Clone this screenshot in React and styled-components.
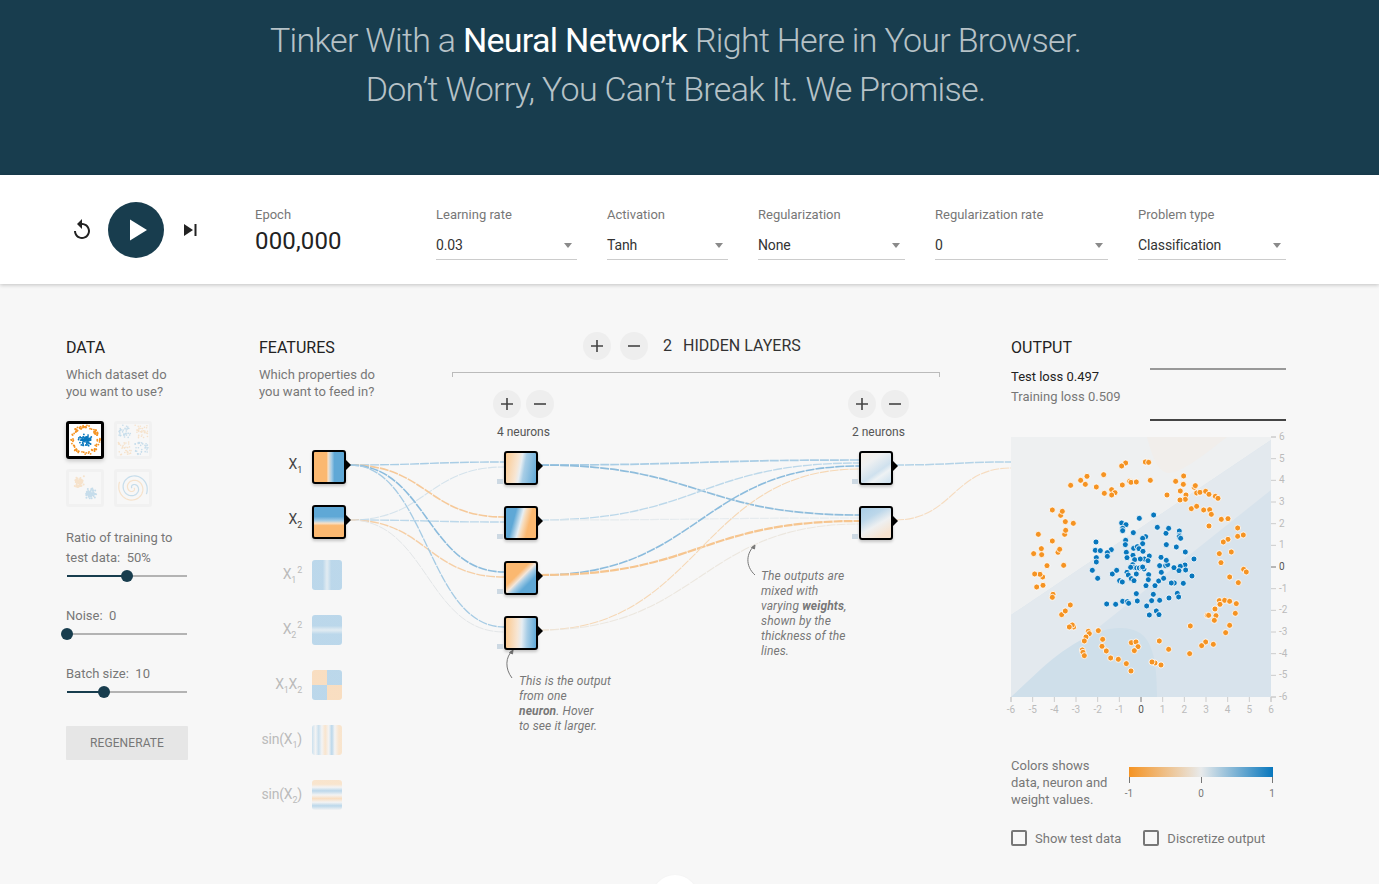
import React from "react";
import styled, { createGlobalStyle } from "styled-components";

const Global = createGlobalStyle`
  html, body { margin: 0; padding: 0; background: #f7f7f7; height: 884px; overflow: hidden; }
  body { font-family: Roboto, "Liberation Sans", sans-serif; color: #777; font-size: 13px; }
  * { box-sizing: border-box; }
`;

const Page = styled.div`position: relative; width: 1379px; height: 884px; overflow: hidden;`;
const Header = styled.header`
  height: 175px; background: #183d4e; padding: 16px 28px 0 0; text-align: center;
`;
const Title = styled.h1`
  margin: 0; font-size: 34px; line-height: 49px; font-weight: 300; color: rgba(255,255,255,.7); letter-spacing: -.7px;
  b { font-weight: 400; color: #fff; }
`;
const Toolbar = styled.section`
  height: 109px; background: #fff; box-shadow: 0 1px 4px rgba(0,0,0,.22); display: flex; align-items: flex-start;
  padding-left: 70px; position: relative;
`;
const Transport = styled.div`display: flex; align-items: center; gap: 14px; width: 185px; height: 110px;`;
const PlayBtn = styled.div`width: 56px; height: 56px; border-radius: 50%; background: #183d4e; display: flex; align-items: center; justify-content: center; padding-left: 3px;`;
const IconSlot = styled.div`width: 24px; display: flex; justify-content: center;`;
const Epoch = styled.div`width: 181px; padding-top: 31px;`;
const CtlLabel = styled.div`font-size: 13px; line-height: 17px; color: #777; font-weight: 400;`;
const EpochValue = styled.div`font-size: 24px; line-height: 28px; color: #222; margin-top: 4px; letter-spacing: .15px;`;
const Selects = styled.div`display: flex; gap: 30px;`;
const SelectCol = styled.div`width: ${p => p.$w}px; padding-top: 31px;`;
const SelectValue = styled.div`
  margin-top: 12px; height: 25px; border-bottom: 1px solid #ccc; color: #333; font-size: 14px; line-height: 16px; padding-top: 2px; position: relative; letter-spacing: -.12px;
  &::after { content: ""; position: absolute; right: 5px; top: 8px; border: 4.5px solid transparent; border-top: 5px solid #8a8a8a; border-bottom: 0; }
`;

const Main = styled.main`display: flex; padding: 55px 0 0 66px;`;
const DataCol = styled.section`width: 193px; flex: none;`;
const Heading = styled.h4`margin: 0 0 ${p => p.$mb ?? 10}px; font-size: 16px; line-height: 17px; font-weight: 400; color: #222;`;
const Sub = styled.p`margin: 0; font-size: 13px; line-height: 17px; color: #777; font-weight: 400;`;
const Thumbs = styled.div`display: grid; grid-template-columns: 38px 38px; gap: 10px; margin-top: 21px;`;
const Thumb = styled.div`
  width: 38px; height: 38px; border-radius: 3px;
  border: ${p => p.$on ? "3px solid #000" : "3px solid #f1f1f1"};
  box-shadow: ${p => p.$on ? "0 2px 4px rgba(0,0,0,.2)" : "none"};
  background: ${p => p.$on ? "#fff" : "#f7f7f7"};
  svg { display: block; width: 100%; height: 100%; opacity: ${p => p.$on ? 1 : .2}; }
`;
const SliderBlock = styled.div`margin-top: ${p => p.$mt}px; width: 122px;`;
const SliderText = styled.div`font-size: 13px; line-height: 20px; color: #777; white-space: pre;`;
const Track = styled.div`position: relative; height: 2px; width: 120px; margin: 7px 0 0 1px; background: #b3b3b3;`;
const Fill = styled.div`height: 2px; background: #183d4e;`;
const Thumbb = styled.div`position: absolute; top: -5px; width: 12px; height: 12px; margin-left: -6px; border-radius: 50%; background: #183d4e;`;
const Regen = styled.div`
  margin-top: 33px; width: 122px; height: 34px; background: #e6e6e6; color: #777; font-size: 12px; display: flex; align-items: center; justify-content: center; border-radius: 1px; letter-spacing: .1px;
`;

const Net = styled.section`position: relative; width: 752px; height: 520px; flex: none;`;
const NetRow = styled.div`display: flex;`;
const Links = styled.svg`position: absolute; left: 0; top: 0; width: 752px; height: 520px; pointer-events: none; overflow: visible;`;
const Features = styled.div`width: 193px;`;
const NodeStack = styled.div`display: flex; flex-direction: column; gap: 21px;`;
const FeatStack = styled(NodeStack)`margin-top: 50px;`;
const FeatRow = styled.div`display: flex; align-items: flex-start; height: 34px;`;
const FeatLabel = styled.div`
  width: 53px; text-align: right; padding-right: 10px; margin-top: 6px; font-size: 14px; line-height: 16px; letter-spacing: -.2px; color: ${p => p.$on ? "#444" : "#bbb"}; white-space: nowrap; flex: none;
  sub, sup { font-size: 9px; line-height: 0; }
  sup { margin-left: 1px; }
`;
const Heat = styled.div`
  position: relative; flex: none; border-radius: 3px;
  width: ${p => p.$on ? 34 : 30}px; height: ${p => p.$on ? 34 : 30}px;
  background: ${p => p.$bg};
  ${p => p.$on ? `border: 2px solid #000; box-shadow: 0 2px 3px rgba(0,0,0,.2);` : `opacity: .4;`}
`;
const Notch = styled.i`
  position: absolute; left: 100%; top: 50%; margin-top: -7px; margin-left: 2px;
  border-left: 5px solid #000; border-top: 5px solid transparent; border-bottom: 5px solid transparent;
`;
const Bias = styled.i`position: absolute; left: -9px; top: 26px; width: 6px; height: 5px; background: #cdd9e3;`;
const Hidden = styled.div`width: 488px; flex: none;`;
const LayerBar = styled.div`
  display: flex; align-items: center; height: 28px; margin: -7px 0 0 131px; gap: 9px;
`;
const RoundBtn = styled.div`
  width: 28px; height: 28px; border-radius: 50%; background: #eee; display: flex; align-items: center; justify-content: center; flex: none;
`;
const LayerCount = styled.div`margin-left: 6px; font-size: 16px; color: #333; white-space: nowrap; margin-top: -1px; display: flex; gap: 11px;`;
const Bracket = styled.div`
  height: 5px; margin-top: 12px; border: 1px solid #bbb; border-bottom: 0;
`;
const Layers = styled.div`display: flex; margin-top: 13px;`;
const Layer = styled.div`width: ${p => p.$w}px; margin-left: ${p => p.$ml}px; flex: none;`;
const NeuronBtns = styled.div`display: flex; gap: 5px; margin-bottom: 7px;`;
const NeuronCount = styled.div`font-size: 12px; line-height: 14px; color: #555; margin-left: 4px; margin-bottom: 12px; white-space: nowrap;`;
const NodeOffset = styled.div`margin-left: 11px;`;
const Note = styled.div`position: absolute; left: ${p => p.$x}px; top: ${p => p.$y}px; width: ${p => p.$w}px; font-size: 12px; line-height: 15px; letter-spacing: .12px; font-style: italic; color: #777; font-weight: 400; b { font-weight: 700; }`;

const OutCol = styled.section`width: 275px; flex: none;`;
const OutTop = styled.div`display: flex; height: 98px; justify-content: space-between;`;
const Loss = styled.div`font-size: 13px; line-height: 20px; color: ${p => p.$dark ? "#222" : "#777"};`;
const LossChart = styled.div`width: 136px; height: 53px; margin-top: 29px; border-top: 2px solid #999; border-bottom: 2px solid #444;`;
const ChartWrap = styled.div`height: 290px; svg { display: block; overflow: visible; }`;
const Legend = styled.div`display: flex; margin-top: 30px; height: 48px;`;
const LegendText = styled.div`width: 118px; font-size: 13px; line-height: 17px; color: #777;`;
const Scale = styled.div`position: relative; width: 144px; margin-top: 10px;`;
const ScaleBar = styled.div`height: 10px; background: linear-gradient(90deg, #f59322, #e8eaeb 50%, #0877bd);`;
const Tick = styled.div`
  position: absolute; left: ${p => p.$x}px; top: 10px; width: 1px; height: 6px; background: #777;
  span { position: absolute; top: 11px; left: 0; transform: translateX(-50%); font-size: 10px; line-height: 11px; color: #777; }
`;
const Checks = styled.div`display: flex; margin-top: 25px; gap: 22px;`;
const Check = styled.label`display: flex; align-items: center; gap: 8px; font-size: 13px; color: #777;`;
const Box = styled.i`width: 16px; height: 16px; border: 2px solid #777; border-radius: 2px; flex: none;`;
const MoreBtn = styled.div`position: absolute; left: 652px; top: 875px; width: 46px; height: 46px; border-radius: 50%; background: #fff; box-shadow: 0 1px 3px rgba(0,0,0,.06);`;

const OR = "#f59322", BL = "#0877bd";
const BG = {
  x1: "linear-gradient(90deg,#fbb870 0 42%,#f6e0c8 47%,#a7cde6 58%,#5fa8d6 68%)",
  x2: "linear-gradient(180deg,#5fa8d6 0 32%,#a7cde6 46%,#f6e0c8 54%,#fbb870 62%)",
  x1s: "linear-gradient(90deg,#62a8d8 0 36%,#b7d5e8 48%,#b7d5e8 52%,#62a8d8 64%)",
  x2s: "linear-gradient(180deg,#62a8d8 0 36%,#b7d5e8 48%,#b7d5e8 52%,#62a8d8 64%)",
  xx: "conic-gradient(from 0deg at 50% 50%,#62a8d8 0 90deg,#fbb870 90deg 180deg,#62a8d8 180deg 270deg,#fbb870 270deg)",
  s1: "linear-gradient(90deg,#8bbfe0 0,#eee 12%,#8bbfe0 22%,#eee 33%,#fbc98f 44%,#eee 56%,#62a8d8 66%,#eee 76%,#fbc98f 90%)",
  s2: "linear-gradient(180deg,#fbc98f 0 14%,#eee 24%,#62a8d8 36%,#eee 50%,#fbb870 62%,#eee 74%,#62a8d8 86%,#eee 100%)",
  n1: "linear-gradient(100deg,#fbc98f 0,#f7e6d4 38%,#e8eef2 48%,#a7cde6 60%,#5fa8d6 100%)",
  n2: "linear-gradient(105deg,#5fa8d6 0 28%,#e6eef3 48%,#f7dcbc 56%,#fbb870 72%)",
  n3: "linear-gradient(135deg,#fbb870 0 38%,#f3e6da 50%,#a7cde6 58%,#5fa8d6 72%)",
  n4: "linear-gradient(92deg,#fbc98f 0,#f7e6d4 38%,#e6edf2 52%,#a7cde6 70%,#5fa8d6 100%)",
  o1: "linear-gradient(145deg,#f7efe6 0,#eef0f1 30%,#cfe1ee 60%,#eef2f4 72%,#c9dfee 100%)",
  o2: "linear-gradient(150deg,#a9cde6 0,#bcd7ea 30%,#eef0f1 55%,#f7e3cf 85%)",
};

const Dots = ({ pts, color, r = 1 }) => pts.map(([x, y], i) => <circle key={i} cx={x} cy={y} r={r} fill={color} />);
const rng = seed => () => (seed = (seed * 16807) % 2147483647) / 2147483647;
const make = (n, seed, fn) => { const r = rng(seed); return Array.from({ length: n }, () => fn(r)); };
const ringPts = make(90, 7, r => { const a = r() * 6.283, d = 11.500 + r() * 3.500; return [16 + d * Math.cos(a), 16 + d * Math.sin(a)]; });
const corePts = make(80, 11, r => { const a = r() * 6.283, d = r() * 7; return [16 + d * Math.cos(a), 16 + d * Math.sin(a)]; });
const xorA = make(70, 3, r => { const q = r() > .5; return [q ? 18 + r() * 13 : 1 + r() * 13, q ? 1 + r() * 13 : 18 + r() * 13]; });
const xorB = make(70, 5, r => { const q = r() > .5; return [q ? 18 + r() * 13 : 1 + r() * 13, q ? 18 + r() * 13 : 1 + r() * 13]; });
const gaussA = make(60, 13, r => [10 + (r() + r() - 1) * 6, 10 + (r() + r() - 1) * 6]);
const gaussB = make(60, 17, r => [22 + (r() + r() - 1) * 6, 22 + (r() + r() - 1) * 6]);
const spiral = off => Array.from({ length: 70 }, (_, i) => { const t = i / 70 * 10, d = 1 + t * 1.4; return `${i ? "L" : "M"}${(16 + d * Math.cos(t + off)).toFixed(1)} ${(16 + d * Math.sin(t + off)).toFixed(1)}`; }).join("");

const Plus = ({ s = 14 }) => <svg width={s} height={s} viewBox="0 0 14 14"><path d="M7 1v12M1 7h12" stroke="#444" strokeWidth="1.6" /></svg>;
const Minus = ({ s = 14 }) => <svg width={s} height={s} viewBox="0 0 14 14"><path d="M1 7h12" stroke="#444" strokeWidth="1.6" /></svg>;

const curve = (x1, y1, x2, y2) => { const m = (x1 + x2) / 2; return `M${x1} ${y1}C${m} ${y1} ${m} ${y2} ${x2} ${y2}`; };
const LINKS = [
  [350,465,504,462,"#a9cde5",1.4],[350,520,504,467,"#d5e3ec",1.1],
  [350,465,504,517,"#f6c999",1.6],[350,520,504,522,"#bcd8ea",1.4],
  [350,465,504,572,"#8cbcdd",1.6],[350,520,504,577,"#f6cfa6",1.4],
  [350,465,504,627,"#a6cbe4",1.3],[350,520,504,632,"#e3e6e8",1],
  [540,465,859,460,"#a9cde5",1.7],[540,465,859,515,"#8fbddc",1.7],
  [540,520,859,463,"#bcd8ea",1.4],[540,520,859,518,"#e6ebee",1.2],
  [540,575,859,466,"#8cbcdd",1.6],[540,575,859,521,"#f6c58f",2.2],
  [540,630,859,469,"#f6d8b6",1.1],[540,630,859,524,"#ece7df",1.1],
  [895,465,1011,462,"#b4d3e7",1.5],[895,520,1011,468,"#f6dcc0",1.1],
];

const FEATS = [
  [<>X<sub>1</sub></>, "x1", true], [<>X<sub>2</sub></>, "x2", true],
  [<>X<sub>1</sub><sup>2</sup></>, "x1s"], [<>X<sub>2</sub><sup>2</sup></>, "x2s"],
  [<>X<sub>1</sub>X<sub>2</sub></>, "xx"], [<>sin(X<sub>1</sub>)</>, "s1"], [<>sin(X<sub>2</sub>)</>, "s2"],
];

const ORANGE = [[377,115],[365,124],[436,112],[446,113],[311,150],[261,155],[242,167],[256,179],[212,182],[289,187],[313,206],[335,195],[345,204],[335,211],[367,181],[389,170],[393,173],[409,172],[451,167],[501,211],[527,170],[551,154],[550,179],[541,199],[558,211],[556,224],[540,226],[583,188],[586,183],[590,205],[600,203],[617,200],[627,209],[646,215],[654,221],[574,252],[590,245],[611,256],[629,255],[634,269],[664,284],[684,282],[627,304],[713,310],[713,335],[730,331],[684,344],[670,352],[658,387],[694,382],[663,414],[731,434],[739,442],[689,457],[715,474],[658,528],[674,527],[689,530],[709,537],[660,539],[645,553],[706,566],[648,573],[622,572],[626,572],[643,587],[689,602],[677,624],[571,604],[617,652],[605,663],[640,659],[569,687],[506,674],[478,649],[483,721],[465,715],[456,712],[394,654],[408,652],[414,666],[403,678],[393,739],[379,717],[355,704],[332,700],[319,679],[306,665],[308,644],[295,618],[265,620],[268,627],[258,637],[253,649],[247,676],[249,683],[253,693],[221,607],[217,601],[208,607],[185,570],[196,559],[211,541],[159,509],[157,518],[129,482],[110,487],[128,457],[120,449],[104,448],[141,423],[191,422],[101,387],[125,390],[124,372],[174,383],[179,374],[157,349],[115,329],[194,329],[197,317],[220,296],[196,291],[182,272],[187,260],[157,256]];
const BLUE = [[418,281],[461,271],[472,308],[365,295],[378,300],[368,311],[368,318],[400,324],[437,336],[428,341],[428,357],[377,347],[376,360],[288,352],[286,377],[301,378],[334,375],[322,384],[322,395],[379,383],[381,399],[401,371],[412,366],[417,372],[429,380],[399,392],[404,405],[448,394],[433,403],[421,403],[398,420],[400,428],[410,430],[418,430],[426,430],[432,433],[428,427],[444,408],[289,399],[289,412],[277,437],[293,461],[337,448],[350,437],[381,443],[385,451],[392,428],[409,448],[394,462],[402,468],[359,468],[367,472],[446,450],[445,465],[476,469],[491,461],[484,443],[479,423],[497,423],[503,420],[499,407],[483,398],[529,367],[556,382],[582,403],[555,421],[541,425],[537,438],[522,429],[557,436],[576,454],[550,476],[523,475],[514,475],[465,483],[438,483],[409,507],[460,509],[479,527],[455,528],[412,529],[368,530],[382,531],[386,536],[347,539],[320,538],[440,544],[469,559],[477,570],[448,571],[507,520],[532,506],[536,517],[499,360],[498,326],[506,311],[538,319],[538,332],[538,336],[542,341]];

const Chart = () => {
  const ticks = Array.from({ length: 13 }, (_, i) => i - 6);
  const px = v => (v + 6) * 260 / 12;
  return (
    <svg width="285" height="285" viewBox="0 0 285 285">
      <rect width="260" height="260" fill="#d8e3ec" />
      <path d="M0 178L260 3V0H0Z" fill="#eef0f1" />
      <path d="M0 178L260 3V53L0 260Z" fill="#e3e9ee" />
      <path d="M136 0C140 15 146 36 158 36C172 36 200 12 216 0Z" fill="#f1eeeb" />
      <path d="M0 260L30 232C60 205 90 190 110 191C135 192 146 205 146 260Z" fill="#cfdfea" />
      <g transform="scale(.3333) translate(-33 -37)">
        {ORANGE.map(([x, y], i) => <circle key={i} cx={x} cy={y} r="9" fill={OR} stroke="#fff" strokeWidth="2.500" />)}
        {BLUE.map(([x, y], i) => <circle key={i} cx={x} cy={y} r="9" fill={BL} stroke="#fff" strokeWidth="2.500" />)}
      </g>
      <path d="M0 260V265M260 260V265" stroke="#ccc" fill="none" />
      <path d="M260 0H265M260 260H265" stroke="#ccc" />
      {ticks.map(t => (
        <g key={t} fontFamily="Roboto, sans-serif" fontSize="10">
          <path d={`M${px(t)} 260v5`} stroke={t === 0 ? "#777" : "#ccc"} />
          <text x={px(t)} y="276" textAnchor="middle" fill={t === 0 ? "#555" : "#bbb"}>{t}</text>
          <path d={`M260 ${px(-t)}h5`} stroke={t === 0 ? "#777" : "#ccc"} />
          <text x="268" y={px(-t) + 3} fill={t === 0 ? "#555" : "#bbb"}>{t}</text>
        </g>
      ))}
    </svg>
  );
};

const Slider = ({ text, pct, mt }) => (
  <SliderBlock $mt={mt}>
    <SliderText>{text}</SliderText>
    <Track>
      <Fill style={{ width: `${pct}%` }} />
      <Thumbb style={{ left: `${pct}%` }} />
    </Track>
  </SliderBlock>
);

const Node = ({ bg, bias = true }) => (
  <Heat $on $bg={BG[bg]}>
    <Notch />
    {bias && <Bias />}
  </Heat>
);

const Sel = ({ w, label, value }) => (
  <SelectCol $w={w}>
    <CtlLabel>{label}</CtlLabel>
    <SelectValue>{value}</SelectValue>
  </SelectCol>
);

export default function App() {
  return (
    <Page>
      <Global />
      <Header>
        <Title>Tinker With a <b>Neural Network</b> Right Here in Your Browser.<br />Don’t Worry, You Can’t Break It. We Promise.</Title>
      </Header>
      <Toolbar>
        <Transport>
          <IconSlot>
            <svg width="24" height="24" viewBox="0 0 24 24"><path d="M12 5V1L7 6l5 5V7c3.31 0 6 2.69 6 6s-2.69 6-6 6-6-2.69-6-6H4c0 4.42 3.58 8 8 8s8-3.58 8-8-3.58-8-8-8z" fill="#222" /></svg>
          </IconSlot>
          <PlayBtn>
            <svg width="18" height="22" viewBox="0 0 18 22"><path d="M1 0.500l17 10.500L1 21.500z" fill="#fff" /></svg>
          </PlayBtn>
          <IconSlot>
            <svg width="14" height="14" viewBox="0 0 14 14"><path d="M1 1l9 6-9 6zM11.500 1h2v12h-2z" fill="#222" /></svg>
          </IconSlot>
        </Transport>
        <Epoch>
          <CtlLabel>Epoch</CtlLabel>
          <EpochValue>000,000</EpochValue>
        </Epoch>
        <Selects>
          <Sel w={141} label="Learning rate" value="0.03" />
          <Sel w={121} label="Activation" value="Tanh" />
          <Sel w={147} label="Regularization" value="None" />
          <Sel w={173} label="Regularization rate" value="0" />
          <Sel w={148} label="Problem type" value="Classification" />
        </Selects>
      </Toolbar>
      <Main>
        <DataCol>
          <Heading>DATA</Heading>
          <Sub>Which dataset do<br />you want to use?</Sub>
          <Thumbs>
            <Thumb $on><svg viewBox="0 0 32 32"><Dots pts={ringPts} color={OR} r=".9" /><Dots pts={corePts} color={BL} r=".9" /></svg></Thumb>
            <Thumb><svg viewBox="0 0 32 32"><Dots pts={xorA} color={OR} r=".8" /><Dots pts={xorB} color={BL} r=".8" /></svg></Thumb>
            <Thumb><svg viewBox="0 0 32 32"><Dots pts={gaussA} color={OR} /><Dots pts={gaussB} color={BL} /></svg></Thumb>
            <Thumb><svg viewBox="0 0 32 32" fill="none" strokeWidth="1.2"><path d={spiral(0)} stroke={OR} /><path d={spiral(3.14)} stroke={BL} /></svg></Thumb>
          </Thumbs>
          <Slider mt={21} text={"Ratio of training to\ntest data:  50%"} pct={50} />
          <Slider mt={29} text="Noise:  0" pct={0} />
          <Slider mt={29} text="Batch size:  10" pct={31} />
          <Regen>REGENERATE</Regen>
        </DataCol>
        <Net>
          <Links viewBox="259 339 752 520" width="752" height="520">
            {LINKS.map(([a, b, c, d, col, w], i) => (
              <path key={i} d={curve(a, b, c, d)} fill="none" stroke={col} strokeWidth={w} strokeDasharray="9 1" />
            ))}
            <path d="M513 650C505 657 505 669 512 678" fill="none" stroke="#777" strokeWidth="1" />
            <path d="M513 650l-3.500 2.500 3 1.500z" fill="#777" stroke="#777" />
            <path d="M755 545C746 553 745 566 755 575" fill="none" stroke="#777" strokeWidth="1" />
            <path d="M755 545l-3.500 2.500 3 1.500z" fill="#777" stroke="#777" />
          </Links>
          <NetRow>
            <Features>
              <Heading>FEATURES</Heading>
              <Sub>Which properties do<br />you want to feed in?</Sub>
              <FeatStack>
                {FEATS.map(([label, bg, on], i) => (
                  <FeatRow key={i}>
                    <FeatLabel $on={on}>{label}</FeatLabel>
                    {on ? <Node bg={bg} bias={false} /> : <Heat $bg={BG[bg]} />}
                  </FeatRow>
                ))}
              </FeatStack>
            </Features>
            <Hidden>
              <LayerBar>
                <RoundBtn><Plus /></RoundBtn>
                <RoundBtn><Minus /></RoundBtn>
                <LayerCount><span>2</span><span>HIDDEN LAYERS</span></LayerCount>
              </LayerBar>
              <Bracket />
              <Layers>
                <Layer $w={61} $ml={41}>
                  <NeuronBtns>
                    <RoundBtn><Plus /></RoundBtn>
                    <RoundBtn><Minus /></RoundBtn>
                  </NeuronBtns>
                  <NeuronCount>4 neurons</NeuronCount>
                  <NodeOffset>
                    <NodeStack>
                      <Node bg="n1" /><Node bg="n2" /><Node bg="n3" /><Node bg="n4" />
                    </NodeStack>
                  </NodeOffset>
                </Layer>
                <Layer $w={61} $ml={294}>
                  <NeuronBtns>
                    <RoundBtn><Plus /></RoundBtn>
                    <RoundBtn><Minus /></RoundBtn>
                  </NeuronBtns>
                  <NeuronCount>2 neurons</NeuronCount>
                  <NodeOffset>
                    <NodeStack>
                      <Node bg="o1" /><Node bg="o2" />
                    </NodeStack>
                  </NodeOffset>
                </Layer>
              </Layers>
            </Hidden>
          </NetRow>
          <Note $x={260} $y={335} $w={110}>This is the output<br />from one<br /><b>neuron</b>. Hover<br />to see it larger.</Note>
          <Note $x={502} $y={230} $w={110}>The outputs are<br />mixed with<br />varying <b>weights</b>,<br />shown by the<br />thickness of the<br />lines.</Note>
        </Net>
        <OutCol>
          <OutTop>
            <div>
              <Heading $mb={11}>OUTPUT</Heading>
              <Loss $dark>Test loss 0.497</Loss>
              <Loss>Training loss 0.509</Loss>
            </div>
            <LossChart />
          </OutTop>
          <ChartWrap><Chart /></ChartWrap>
          <Legend>
            <LegendText>Colors shows<br />data, neuron and<br />weight values.</LegendText>
            <Scale>
              <ScaleBar />
              <Tick $x={0}><span>-1</span></Tick>
              <Tick $x={72}><span>0</span></Tick>
              <Tick $x={143}><span>1</span></Tick>
            </Scale>
          </Legend>
          <Checks>
            <Check><Box />Show test data</Check>
            <Check><Box />Discretize output</Check>
          </Checks>
        </OutCol>
      </Main>
      <MoreBtn />
    </Page>
  );
}
